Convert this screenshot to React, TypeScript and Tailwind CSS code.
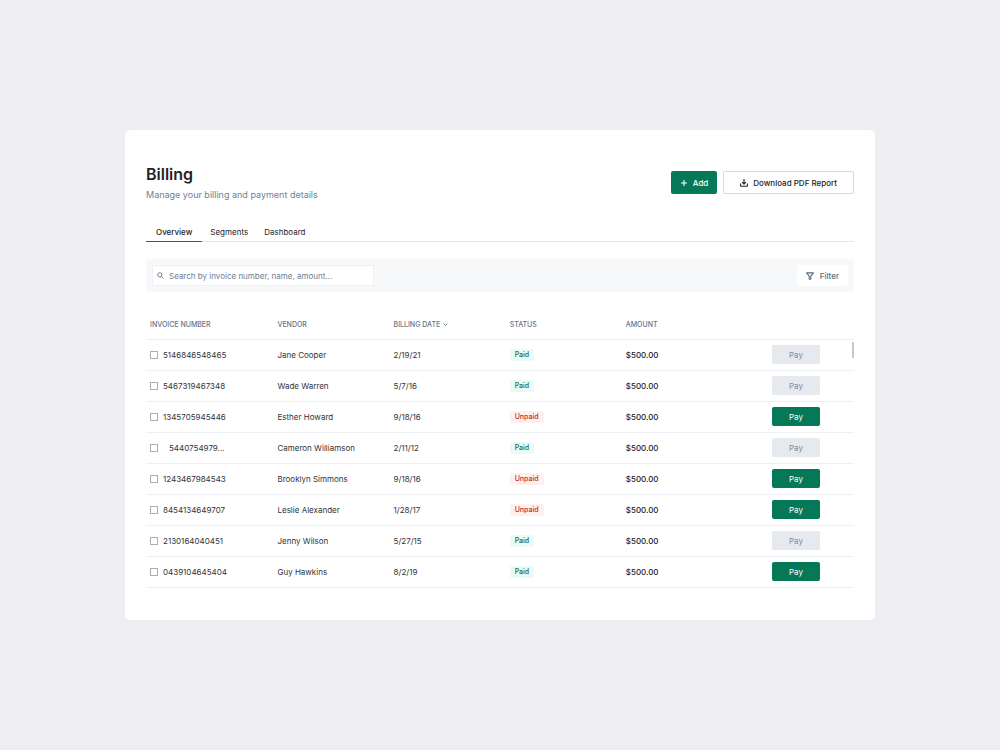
import { useState } from 'react';

type Invoice = {
  number: string;
  vendor: string;
  date: string;
  paid: boolean;
  payable: boolean;
  indented?: boolean;
};

const invoices: Invoice[] = [
  { number: '5146846548465', vendor: 'Jane Cooper', date: '2/19/21', paid: true, payable: false },
  { number: '5467319467348', vendor: 'Wade Warren', date: '5/7/16', paid: true, payable: false },
  { number: '1345705945446', vendor: 'Esther Howard', date: '9/18/16', paid: false, payable: true },
  { number: '5440754979...', vendor: 'Cameron Williamson', date: '2/11/12', paid: true, payable: false, indented: true },
  { number: '1243467984543', vendor: 'Brooklyn Simmons', date: '9/18/16', paid: false, payable: true },
  { number: '8454134649707', vendor: 'Leslie Alexander', date: '1/28/17', paid: false, payable: true },
  { number: '2130164040451', vendor: 'Jenny Wilson', date: '5/27/15', paid: true, payable: false },
  { number: '0439104645404', vendor: 'Guy Hawkins', date: '8/2/19', paid: true, payable: true },
];

const tabs = ['Overview', 'Segments', 'Dashboard'];

function PlusIcon() {
  return (
    <svg className="size-2" viewBox="0 0 8 8" fill="none" stroke="currentColor" strokeWidth="1.1" aria-hidden="true">
      <path d="M4 1v6M1 4h6" />
    </svg>
  );
}

function DownloadIcon() {
  return (
    <svg className="size-2" viewBox="0 0 8 8" fill="none" stroke="currentColor" strokeWidth="1.1" strokeLinejoin="round" aria-hidden="true">
      <path d="M4 0v5M2.1 3.2l1.9 1.9 1.9-1.9M0.6 4.6v2.1q0 .6.6.6h5.6q.6 0 .6-.6V4.6" />
    </svg>
  );
}

function SearchIcon() {
  return (
    <svg className="size-[7px] shrink-0" viewBox="0 0 7 7" fill="none" stroke="currentColor" strokeWidth="1" aria-hidden="true">
      <circle cx="2.8" cy="2.8" r="2.1" />
      <path d="M4.3 4.3l2.2 2.2" />
    </svg>
  );
}

function FilterIcon() {
  return (
    <svg className="size-2" viewBox="0 0 8 8" fill="none" stroke="currentColor" strokeWidth="1.1" strokeLinejoin="round" aria-hidden="true">
      <path d="M0.6 0.9h6.8L4.8 4.2v2.9H3.2V4.2z" />
    </svg>
  );
}

function ChevronIcon() {
  return (
    <svg className="size-[5px]" viewBox="0 0 5 5" fill="none" stroke="currentColor" strokeWidth="0.9" aria-hidden="true">
      <path d="M0.5 1.5l2 2 2-2" />
    </svg>
  );
}

export default function App() {
  const [tab, setTab] = useState('Overview');

  return (
    <div className="flex min-h-screen items-center justify-center bg-[#ededf2] font-['Inter',sans-serif] text-[#1f2329]">
      <main className="w-3/4 rounded-[5px] bg-white px-[21px] pt-[34px] pb-8">
        <header className="flex items-center justify-between">
          <div>
            <h1 className="text-[16px] leading-5 font-semibold">Billing</h1>
            <p className="mt-[5px] text-[9px] leading-3 text-[#718096]">Manage your billing and payment details</p>
          </div>
          <div className="flex gap-1.5">
            <button className="flex h-[23px] items-center gap-[5px] rounded-xs bg-[#047857] px-[9px] text-[8px] font-medium text-white">
              <PlusIcon />
              Add
            </button>
            <button className="flex h-[23px] items-center gap-[5px] rounded-xs border border-[#d5dae1] px-4 text-[8px] font-medium">
              <DownloadIcon />
              Download PDF Report
            </button>
          </div>
        </header>

        <nav className="mt-[21px] flex border-b border-[#e6e8ec]" role="tablist">
          {tabs.map((name) => (
            <button
              key={name}
              role="tab"
              aria-selected={tab === name}
              onClick={() => setTab(name)}
              className={
                tab === name
                  ? '-mb-px border-b border-b-[#047857] px-2.5 pt-1 pb-[3px] text-[8px] leading-3 font-medium'
                  : '-mb-px border-b border-b-transparent px-2 pt-1 pb-[3px] text-[8px] leading-3'
              }
            >
              {name}
            </button>
          ))}
        </nav>

        <div className="mt-[17px] flex items-center justify-between rounded-xs bg-[#f7f8fa] px-1.5 py-1.5">
          <label className="flex h-[21px] w-[222px] items-center gap-[5px] border border-[#edf0f4] bg-white px-1 text-[#718096]">
            <SearchIcon />
            <input
              type="text"
              aria-label="Search invoices"
              placeholder="Search by invoice number, name, amount..."
              className="min-w-0 flex-1 bg-transparent text-[8px] leading-3 outline-none placeholder:text-[#718096]"
            />
          </label>
          <button className="flex h-[21px] items-center gap-1.5 rounded-xs bg-white px-[9px] text-[8px] font-medium text-[#5a6a85]">
            <FilterIcon />
            Filter
          </button>
        </div>

        <div className="relative mt-4">
          <table className="w-full table-fixed border-collapse text-left text-[8px] leading-3">
            <colgroup>
              <col className="w-[18%]" />
              <col className="w-[16.4%]" />
              <col className="w-[16.4%]" />
              <col className="w-[16.4%]" />
              <col className="w-[16.4%]" />
              <col className="w-[16.4%]" />
            </colgroup>
            <thead>
              <tr className="h-[31px] border-b border-[#eff0f3] text-[7px] text-[#64748b] uppercase">
                <th className="pt-0.5 pl-1 font-medium">Invoice number</th>
                <th className="pt-0.5 pl-1 font-medium">Vendor</th>
                <th className="pt-0.5 pl-1 font-medium">
                  <button className="flex items-center gap-[3px] uppercase">
                    Billing date
                    <ChevronIcon />
                  </button>
                </th>
                <th className="pt-0.5 pl-1 font-medium">Status</th>
                <th className="pt-0.5 pl-1 font-medium">Amount</th>
                <th aria-label="Action" />
              </tr>
            </thead>
            <tbody className="text-[#30343a]">
              {invoices.map((invoice) => (
                <tr key={invoice.number} className="h-[31px] border-b border-[#eff0f3]">
                  <td className="pl-1">
                    <label className="flex items-center gap-[5px]">
                      <input type="checkbox" className="size-2 shrink-0 appearance-none border border-[#a9aeb8] checked:bg-[#047857]" />
                      <span className={invoice.indented ? 'pl-1.5' : ''}>{invoice.number}</span>
                    </label>
                  </td>
                  <td className="pl-1">{invoice.vendor}</td>
                  <td className="pl-1">{invoice.date}</td>
                  <td className="pl-1">
                    <span
                      className={
                        invoice.paid
                          ? 'inline-block rounded-xs bg-[#e9fbf2] px-[5px] align-middle text-[7px] font-medium text-[#276749]'
                          : 'inline-block rounded-xs bg-[#fff0f0] px-[5px] align-middle text-[7px] font-medium text-[#c02b2b]'
                      }
                    >
                      {invoice.paid ? 'Paid' : 'Unpaid'}
                    </span>
                  </td>
                  <td className="pl-1 font-medium text-[#1f2329]">$500.00</td>
                  <td className="text-center">
                    <button
                      disabled={!invoice.payable}
                      className="h-[19px] w-12 rounded-xs bg-[#047857] align-middle text-white disabled:bg-[#e6eaee] disabled:text-[#7c8aa0]"
                    >
                      Pay
                    </button>
                  </td>
                </tr>
              ))}
            </tbody>
          </table>
          <div className="absolute top-[34px] right-0 h-4 w-0.5 bg-[#c3c9d2]" />
        </div>
      </main>
    </div>
  );
}
